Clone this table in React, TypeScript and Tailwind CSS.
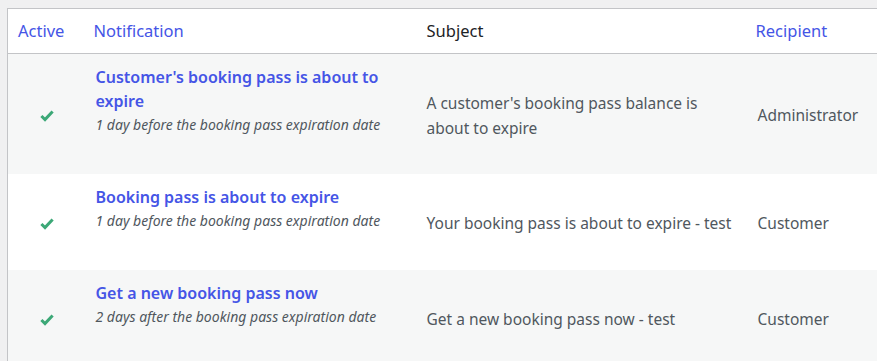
import React from "react"

interface NotificationRow {
  title: string
  timing: string
  subject: string
  recipient: string
  active: boolean
}

const rows: NotificationRow[] = [
  {
    title: "Customer's booking pass is about to expire",
    timing: "1 day before the booking pass expiration date",
    subject: "A customer's booking pass balance is about to expire",
    recipient: "Administrator",
    active: true,
  },
  {
    title: "Booking pass is about to expire",
    timing: "1 day before the booking pass expiration date",
    subject: "Your booking pass is about to expire - test",
    recipient: "Customer",
    active: true,
  },
  {
    title: "Get a new booking pass now",
    timing: "2 days after the booking pass expiration date",
    subject: "Get a new booking pass now - test",
    recipient: "Customer",
    active: true,
  },
]

const CheckIcon = () => (
  <svg width="14" height="14" viewBox="0 0 14 14" className="inline-block">
    <path d="M1.4 7 L5 10.6 L12.6 2.4" fill="none" stroke="#3ca877" strokeWidth="3" strokeLinecap="butt" strokeLinejoin="miter" />
  </svg>
)

const App = () => {
  return (
    <div
      className="min-h-[361px] w-[877px] overflow-hidden bg-[#f0f0f1] pl-[7px] pt-[8px]"
      style={{ fontFamily: '"Noto Sans", "Open Sans", sans-serif' }}
    >
      <table className="w-[900px] table-fixed border-collapse border border-[#c3c4c7] bg-white">
        <colgroup>
          <col className="w-[78px]" />
          <col className="w-[331px]" />
          <col className="w-[331px]" />
          <col />
        </colgroup>
        <thead>
          <tr className="h-[45px] border-b border-[#c3c4c7] text-left text-[16.5px]">
            <th className="px-[10px] pt-[1px] font-normal text-[#4555e6]">Active</th>
            <th className="pl-[8px] pr-[10px] pt-[1px] font-normal text-[#4555e6]">Notification</th>
            <th className="px-[10px] pt-[1px] font-normal text-[#1d2327]">Subject</th>
            <th className="pl-[8px] pr-[10px] pt-[1px] font-normal text-[#4555e6]">Recipient</th>
          </tr>
        </thead>
        <tbody>
          {rows.map((row, i) => (
            <tr key={row.title} className={i % 2 === 0 ? "bg-[#f6f7f7]" : "bg-white"}>
              <td className="px-[10px] text-center align-middle">{row.active && <CheckIcon />}</td>
              <td className="px-[10px] pt-[11px] pb-[13px] align-top">
                <a className="block text-[16px] leading-[24px] font-semibold text-[#4555e6]">{row.title}</a>
                <div className="text-[14px] leading-[24px] italic text-[#50575e]">{row.timing}</div>
                <div className="invisible h-[24px] text-[13px]">Edit</div>
              </td>
              <td className="px-[10px] pt-[3px] align-middle text-[15.5px] leading-[25px] text-[#50575e]">{row.subject}</td>
              <td className="px-[10px] pt-[3px] align-middle text-[15.5px] leading-[25px] text-[#50575e]">{row.recipient}</td>
            </tr>
          ))}
        </tbody>
      </table>
    </div>
  )
}

export default App
